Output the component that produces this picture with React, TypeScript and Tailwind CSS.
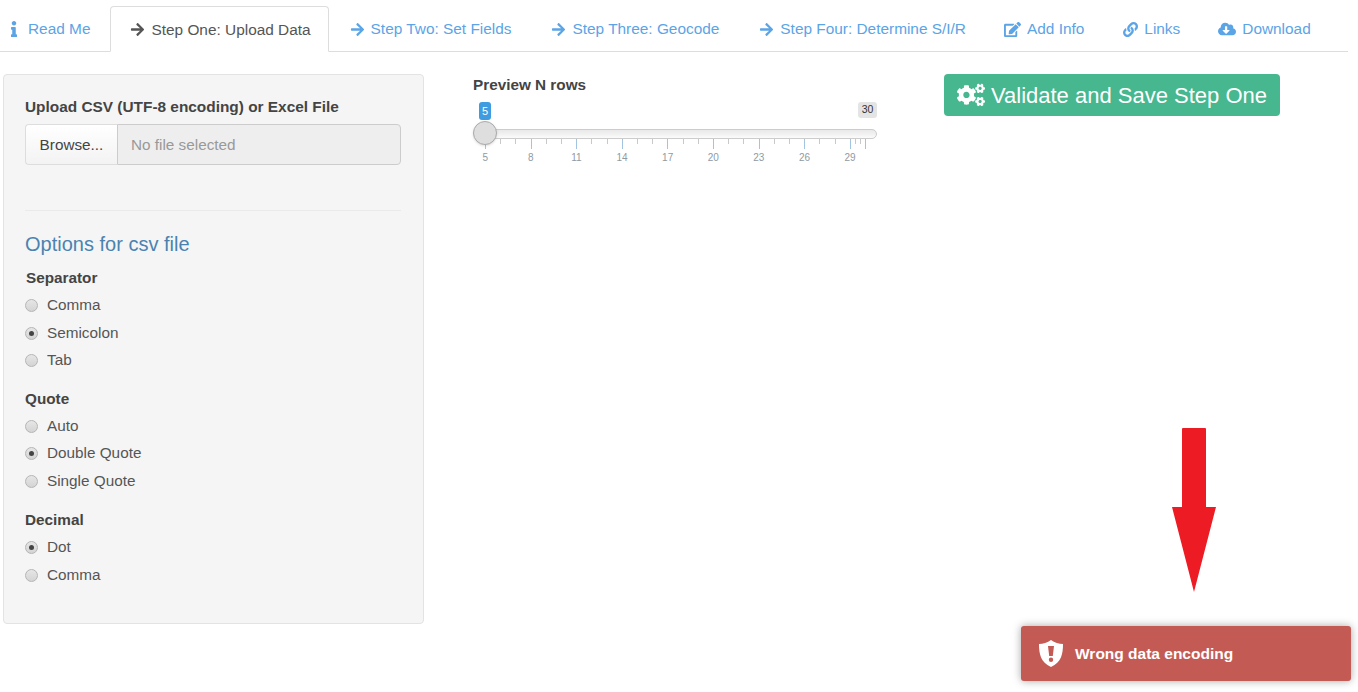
import React from "react";
import { FaInfo, FaArrowRight, FaEdit, FaLink, FaCloudDownloadAlt, FaCogs } from "react-icons/fa";

interface TabProps {
  icon: React.ElementType;
  label: string;
  active?: boolean;
  iconClass?: string;
}

const Tab: React.FC<TabProps> = ({ icon: Icon, label, active, iconClass }) => (
  <div
    className={`flex items-center h-[46px] mr-[2px] rounded-t border ${
      active
        ? "pt-[1px] pl-[19px] pr-[17px] bg-white border-[#dddddd] border-b-white text-[#555555] -mb-px"
        : "pt-[2px] px-[18px] border-transparent text-[#5ba4e6]"
    }`}
  >
    <Icon className={iconClass ?? "text-[15px] mr-[6px]"} />
    <span>{label}</span>
  </div>
);

const Radio: React.FC<{ label: string; checked?: boolean }> = ({ label, checked }) => (
  <div className="flex items-center h-[27.5px]">
    <span className="w-[13px] h-[13px] rounded-full border border-[#b5b5b5] bg-gradient-to-b from-[#e6e6e6] to-[#d4d4d4] flex items-center justify-center">
      {checked && <span className="w-[5px] h-[5px] rounded-full bg-[#444444]" />}
    </span>
    <span className="ml-[9px] text-[15.3px] text-[#555555]">{label}</span>
  </div>
);

const GroupLabel: React.FC<{ children: React.ReactNode }> = ({ children }) => (
  <div className="font-bold text-[#444444] text-[15.3px] h-[21px] leading-[21px]">{children}</div>
);

const TICK_STEP = 15.2;

// 5..30 ruler under the slider track
const Ruler: React.FC = () => {
  const ticks: React.ReactNode[] = [];
  for (let i = 0; i <= 24; i++) {
    const major = i % 3 === 0;
    const x = 0.5 + Math.round(i * TICK_STEP);
    ticks.push(
      <line key={i} x1={x} x2={x} y1={0} y2={major ? 10 : 5} stroke={major ? "#a3c4e0" : "#c9c9c9"} strokeWidth={1} />
    );
  }
  [370, 375, 380].forEach((x) =>
    ticks.push(<line key={x} x1={x + 0.5} x2={x + 0.5} y1={0} y2={x === 380 ? 10 : 5} stroke={x === 380 ? "#a3c4e0" : "#c9c9c9"} />)
  );
  return (
    <svg width="392" height="10" className="block ml-[12px]">
      {ticks}
    </svg>
  );
};

const ShieldIcon: React.FC = () => (
  <svg width="24" height="27" viewBox="0 0 24 27" className="shrink-0">
    <path
      fill="#ffffff"
      fillRule="evenodd"
      d="M12 0 C15.5 2.5 20 4 24 4 C24 14 22.5 22 12 27 C1.5 22 0 14 0 4 C4 4 8.5 2.5 12 0 Z M9 6 L15 6 L13.8 16 L10.2 16 Z M12 17.5 A2.2 2.2 0 1 0 12 21.9 A2.2 2.2 0 1 0 12 17.5 Z"
    />
  </svg>
);

export default function App() {
  return (
    <div
      className="relative h-screen overflow-hidden bg-white text-[15.3px] text-[#555555]"
      style={{ fontFamily: '"Liberation Sans", Arial, sans-serif' }}
    >
      {/* Tabs */}
      <nav className="flex items-end h-[52px] w-[1348px] border-b border-[#dddddd] text-[15.4px]">
        <div className="flex items-center h-[46px] pt-[2px] pl-[6px] pr-[19px] mr-[1px] text-[#5ba4e6]">
          <FaInfo className="text-[16px] mr-[6px]" />
          <span>Read Me</span>
        </div>
        <Tab icon={FaArrowRight} label="Step One: Upload Data" active />
        <Tab icon={FaArrowRight} label="Step Two: Set Fields" />
        <Tab icon={FaArrowRight} label="Step Three: Geocode" />
        <Tab icon={FaArrowRight} label="Step Four: Determine S/I/R" />
        <Tab icon={FaEdit} label="Add Info" iconClass="text-[17px] -ml-[2px] mr-[6px]" />
        <Tab icon={FaLink} label="Links" iconClass="text-[15px] -ml-[1px] mr-[6px]" />
        <Tab icon={FaCloudDownloadAlt} label="Download" iconClass="text-[18px] -ml-[2px] mr-[6px]" />
      </nav>

      <main className="flex items-start pt-[22px]">
        {/* Sidebar panel */}
        <aside className="ml-[3px] w-[421px] h-[550px] shrink-0 rounded bg-[#f5f5f5] border border-[#e3e3e3] pt-[21px] px-[21px]">
          <div className="font-bold text-[#444444] text-[15.4px] leading-[21px]">Upload CSV (UTF-8 encoding) or Excel File</div>
          <div className="flex h-[41px] w-[376px] mt-[7px]">
            <div className="w-[92px] pt-px flex items-center justify-center rounded-l border border-[#dddddd] border-r-0 bg-gradient-to-b from-white to-[#f3f3f3] text-[#444444]">
              Browse...
            </div>
            <div className="flex-1 pt-px flex items-center pl-[13px] rounded-r border border-[#cccccc] bg-[#eeeeee] text-[#999999]">
              No file selected
            </div>
          </div>
          <div className="mt-[45px] w-[376px] border-t border-[#eaeaea]" />
          <h4 className="mt-[20px] text-[20px] leading-[27px] text-[#4a83b0]">Options for csv file</h4>
          <div className="mt-[9px] ml-[1px]">
            <GroupLabel>Separator</GroupLabel>
          </div>
          <div className="mt-[4px]">
            <Radio label="Comma" />
            <Radio label="Semicolon" checked />
            <Radio label="Tab" />
          </div>
          <div className="mt-[13px]">
            <GroupLabel>Quote</GroupLabel>
          </div>
          <div className="mt-[4px]">
            <Radio label="Auto" />
            <Radio label="Double Quote" checked />
            <Radio label="Single Quote" />
          </div>
          <div className="mt-[14px]">
            <GroupLabel>Decimal</GroupLabel>
          </div>
          <div className="mt-[4px]">
            <Radio label="Dot" checked />
            <Radio label="Comma" />
          </div>
        </aside>

        {/* Slider */}
        <section className="ml-[49px] w-[404px] shrink-0">
          <div className="font-bold text-[#444444] text-[15.3px] leading-[21px]">Preview N rows</div>
          <div className="relative mt-[7px] h-[18px]">
            <span className="absolute left-[6px] top-0 w-[12px] h-[18px] rounded-[3px] bg-[#3f9ce0] text-white text-[11px] flex items-center justify-center">5</span>
            <span className="absolute right-0 top-0 w-[19px] h-[16px] rounded-[3px] bg-[#e4e4e4] text-[#333333] text-[10.5px] flex items-center justify-center">30</span>
          </div>
          <div className="relative mt-[9px] h-[10px] ml-[5px] rounded-full border border-[#cccccc] bg-gradient-to-b from-[#e8e8e8] to-[#fbfbfb]">
            <span className="absolute -left-[6px] -top-[9px] w-[24px] h-[24px] rounded-full border border-[#aaaaaa] bg-[#dedede] shadow-sm" />
          </div>
          <Ruler />
          <div className="flex ml-[-10.5px] mt-[3px] text-[10px] leading-[12px] text-[#8f9aa3]">
            {[5, 8, 11, 14, 17, 20, 23, 26, 29].map((n) => (
              <span key={n} className="w-[45.6px] text-center shrink-0">
                {n}
              </span>
            ))}
          </div>
        </section>

        {/* Save button */}
        <button className="ml-[67px] w-[336px] h-[42px] shrink-0 rounded bg-[#46b78f] text-white text-[22px] whitespace-nowrap flex items-center justify-center">
          <FaCogs className="text-[28px] mr-[6px] shrink-0" />
          Validate and Save Step One
        </button>
      </main>

      {/* Annotation arrow */}
      <svg className="absolute left-[1172px] top-[428px]" width="44" height="164" viewBox="0 0 44 164">
        <path fill="#ed1c24" d="M10 1 Q10 0 11 0 L33 0 Q34 0 34 1 L34 79 L44 79 L22 164 L0 79 L10 79 Z" />
      </svg>

      {/* Toast */}
      <div className="absolute right-[7px] bottom-[11px] w-[330px] h-[55px] rounded-[3px] bg-[#c45a54] text-white font-bold text-[15.5px] flex items-center pl-[18px] shadow-[0_0_8px_rgba(0,0,0,0.35)]">
        <ShieldIcon />
        <span className="ml-[12px]">Wrong data encoding</span>
      </div>
    </div>
  );
}
